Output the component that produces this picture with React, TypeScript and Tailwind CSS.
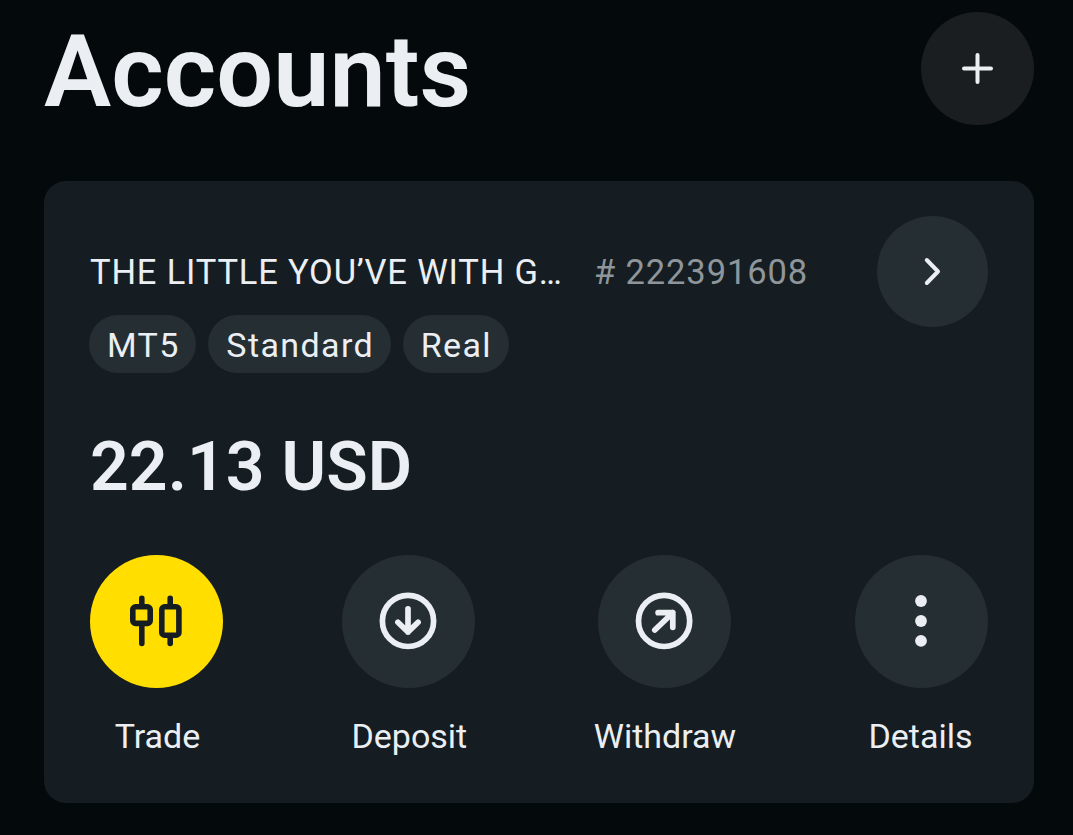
import type { ReactNode } from 'react';

interface AccountAction {
  label: string;
  icon: ReactNode;
  labelClass?: string;
  primary?: boolean;
}

const TradeIcon = () => (
  <svg width="61" height="61" viewBox="0 0 61 61" fill="none" stroke="currentColor" strokeWidth="5.6" strokeLinecap="round">
    <rect x="6.8" y="15.8" width="17.4" height="16.6" rx="2.8" />
    <path d="M15.8 7.3V15M15.8 33V52.5" />
    <rect x="35.8" y="15.8" width="17.1" height="28.4" rx="2.8" />
    <path d="M44.2 7.3V15M44.2 45V52.5" />
  </svg>
);

const DepositIcon = () => (
  <svg width="61" height="61" viewBox="0 0 61 61" fill="none" stroke="currentColor" strokeWidth="5.7" strokeLinecap="round" strokeLinejoin="round">
    <circle cx="30" cy="29.9" r="25.6" />
    <path d="M30 17.8V41M19.9 31.2L30 41L40.1 31.2" />
  </svg>
);

const WithdrawIcon = () => (
  <svg width="61" height="61" viewBox="0 0 61 61" fill="none" stroke="currentColor" strokeWidth="5.7" strokeLinecap="round" strokeLinejoin="round">
    <circle cx="30.1" cy="29.9" r="25.6" />
    <path d="M20.8 39L38.8 21.7M24.1 21.7H38.8V36.3" />
  </svg>
);

const DetailsIcon = () => (
  <svg width="61" height="61" viewBox="0 0 61 61" fill="currentColor">
    <circle cx="30" cy="10" r="5.9" />
    <circle cx="30" cy="30" r="5.9" />
    <circle cx="30" cy="49.8" r="5.9" />
  </svg>
);

const tags = ['MT5', 'Standard', 'Real'];

const actions: AccountAction[] = [
  { label: 'Trade', icon: <TradeIcon />, labelClass: 'pl-0.5', primary: true },
  { label: 'Deposit', icon: <DepositIcon />, labelClass: 'pl-0.5' },
  { label: 'Withdraw', icon: <WithdrawIcon /> },
  { label: 'Details', icon: <DetailsIcon />, labelClass: 'pr-0.5' },
];

export default function App() {
  return (
    <div className="min-h-screen bg-[#04090c] pt-3 pr-[39px] pl-11 font-['Roboto',sans-serif] text-[#ebeff3]">
      {/* Header */}
      <header className="flex h-[121px] items-start justify-between">
        <h1 className="text-[100.7px] leading-[120px] font-semibold">Accounts</h1>
        <button
          aria-label="Add account"
          className="flex size-[113px] items-center justify-center rounded-full bg-[#1a1e21]"
        >
          <svg width="33" height="33" viewBox="0 0 33 33" fill="none" stroke="currentColor" strokeWidth="4" strokeLinecap="round">
            <path d="M16.5 3V30M3 16.5H30" />
          </svg>
        </button>
      </header>

      {/* Account card */}
      <section className="mt-12 h-[622px] rounded-[22px] bg-[#151d22] px-[46px] pt-[35px]">
        <div className="flex items-start justify-between">
          <div className="pt-[35px]">
            <div className="flex gap-8 text-[34.5px] leading-[42px] whitespace-nowrap">
              <span className="w-[472px] tracking-[0.82px]">THE LITTLE YOU’VE WITH G…</span>
              <span className="tracking-[0.88px] text-[#8f969b]"># 222391608</span>
            </div>
            <div className="mt-[22px] -ml-px flex gap-3">
              {tags.map((tag) => (
                <span
                  key={tag}
                  className="h-[58px] rounded-full bg-[#242e33] pr-[16.5px] pl-[18px] text-[34px] leading-[60px] tracking-[1.4px]"
                >
                  {tag}
                </span>
              ))}
            </div>
          </div>
          <button
            aria-label="Open account"
            className="flex size-[111px] shrink-0 items-center justify-center rounded-full bg-[#242e33]"
          >
            <svg width="31" height="31" viewBox="0 0 31 31" fill="none" stroke="currentColor" strokeWidth="4" strokeLinecap="round" strokeLinejoin="round">
              <path d="M9.8 4L21 15.5L9.8 27" />
            </svg>
          </button>
        </div>

        <p className="mt-[54px] text-[68px] leading-[80px] font-semibold">22.13 USD</p>

        {/* Actions */}
        <div className="mt-12 flex justify-between">
          {actions.map(({ label, icon, labelClass, primary }) => (
            <button key={label} className="flex flex-col items-center">
              <span
                className={`flex size-[133px] items-center justify-center rounded-full ${
                  primary ? 'bg-[#ffde00] text-[#151d22]' : 'bg-[#242e33]'
                }`}
              >
                {icon}
              </span>
              <span className={`mt-7 text-[34px] leading-10 ${labelClass ?? ''}`}>{label}</span>
            </button>
          ))}
        </div>
      </section>
    </div>
  );
}
